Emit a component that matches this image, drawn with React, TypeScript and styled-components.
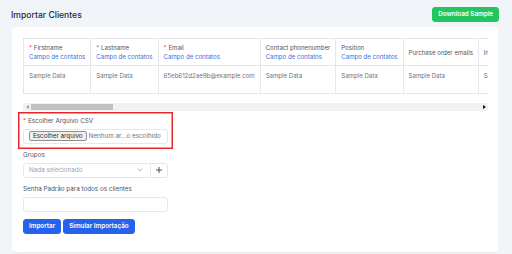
import React from "react";
import styled, { createGlobalStyle } from "styled-components";

const GlobalStyle = createGlobalStyle`
  body {
    margin: 0;
    background: #f1f4f9;
    font-family: "Inter", "Noto Sans", sans-serif;
    color: #374151;
  }
  * {
    box-sizing: border-box;
  }
`;

type Column = {
  name: string;
  required?: boolean;
  contact?: boolean;
  sample?: string;
};

const columns: Column[] = [
  { name: "Firstname", required: true, contact: true },
  { name: "Lastname", required: true, contact: true },
  { name: "Email", required: true, contact: true, sample: "65eb612d2ae9b@example.com" },
  { name: "Contact phonenumber", contact: true },
  { name: "Position", contact: true },
  { name: "Purchase order emails" },
  { name: "Invoice emails" },
  { name: "Estimate emails" },
  { name: "Credit note emails" },
  { name: "Contract emails" },
  { name: "Task emails" },
  { name: "Project emails" },
  { name: "Ticket emails" },
  { name: "Company", required: true },
  { name: "Vat" },
  { name: "Phonenumber" },
  { name: "Country" },
  { name: "City" },
  { name: "Zip" },
  { name: "State" },
  { name: "Address" },
  { name: "Website" },
  { name: "Billing street" },
  { name: "Billing city" },
  { name: "Billing state" },
  { name: "Billing zip" },
  { name: "Billing country" },
  { name: "Shipping street" },
  { name: "Shipping city" },
  { name: "Shipping state" },
  { name: "Shipping zip" },
  { name: "Shipping country" },
];

// visible part of the table / whole table, for the scroll thumb
const scrollRatio = 0.183;

export default function App() {
  return (
    <>
      <GlobalStyle />
      <Page>
        <TopBar>
          <Title>Importar Clientes</Title>
          <Button $variant="green">Download Sample</Button>
        </TopBar>
        <Card>
          <TableWrap>
            <Table>
              <thead>
                <tr>
                  {columns.map((c) => (
                    <Th key={c.name}>
                      <div>
                        {c.required && <Req>* </Req>}
                        {c.name}
                      </div>
                      {c.contact && <Contact>Campo de contatos</Contact>}
                    </Th>
                  ))}
                </tr>
              </thead>
              <tbody>
                <tr>
                  {columns.map((c) => (
                    <Td key={c.name}>{c.sample ?? "Sample Data"}</Td>
                  ))}
                </tr>
              </tbody>
            </Table>
          </TableWrap>
          <ScrollBar>
            <ScrollArrow>
              <svg width="3" height="4" viewBox="0 0 3 4">
                <path d="M3 0 L0 2 L3 4 Z" fill="#a3a3a3" />
              </svg>
            </ScrollArrow>
            <ScrollTrack>
              <ScrollThumb style={{ width: `${scrollRatio * 100}%` }} />
            </ScrollTrack>
            <ScrollArrow>
              <svg width="3" height="4" viewBox="0 0 3 4">
                <path d="M0 0 L3 2 L0 4 Z" fill="#111" />
              </svg>
            </ScrollArrow>
          </ScrollBar>

          <Form>
            <Group $highlight>
              <Label>
                <Req>* </Req>Escolher Arquivo CSV
              </Label>
              <FileBox>
                <FileButton>Escolher arquivo</FileButton>
                <FileName>Nenhum ar...o escolhido</FileName>
              </FileBox>
            </Group>

            <Group>
              <Label>Grupos</Label>
              <SelectGroup>
                <Select>
                  <span>Nada selecionado</span>
                  <svg width="6" height="4" viewBox="0 0 6 4">
                    <path d="M0.7 0.7 L3 3 L5.3 0.7" fill="none" stroke="#9ca3af" strokeWidth="0.8" />
                  </svg>
                </Select>
                <AddButton>
                  <svg width="6" height="6" viewBox="0 0 6 6">
                    <path d="M3 0 V6 M0 3 H6" stroke="#4b5563" strokeWidth="1" />
                  </svg>
                </AddButton>
              </SelectGroup>
            </Group>

            <Group>
              <Label>Senha Padrão para todos os clientes</Label>
              <TextInput />
            </Group>

            <Actions>
              <Button $variant="blue">Importar</Button>
              <Button $variant="blue">Simular Importação</Button>
            </Actions>
          </Form>
        </Card>
      </Page>
    </>
  );
}

const Page = styled.div`
  width: 512px;
  min-height: 254px;
  padding: 7px 13px 3px 12px;
`;

const TopBar = styled.div`
  display: flex;
  align-items: center;
  justify-content: space-between;
  height: 15px;
`;

const Title = styled.h1`
  margin: 0 0 0 -1px;
  font-size: 8.6px;
  font-weight: 500;
  color: #1f2937;
`;

const Button = styled.button<{ $variant: "green" | "blue" }>`
  height: 15px;
  padding: 0 5px;
  border-radius: 3px;
  border: 1px solid ${(p) => (p.$variant === "green" ? "#22c55e" : "#2563eb")};
  background: ${(p) => (p.$variant === "green" ? "#22c55e" : "#2563eb")};
  color: #fff;
  font-family: "Inter", sans-serif;
  font-size: 6.3px;
  font-weight: 600;
  line-height: 13px;
  white-space: nowrap;
`;

const Card = styled.div`
  margin-top: 5px;
  margin-right: 1px;
  background: #fff;
  border-radius: 4px;
  box-shadow: 0 1px 1px rgba(0, 0, 0, 0.04);
  padding: 11px 10px 18px 11px;
`;

const TableWrap = styled.div`
  overflow: hidden;
  padding-bottom: 9px;
`;

const Table = styled.table`
  border-collapse: collapse;
  font-size: 6.1px;
  line-height: 9px;
  white-space: nowrap;
`;

const Th = styled.th`
  border: 1px solid #e5e7eb;
  padding: 4px 5px;
  height: 27px;
  text-align: left;
  font-weight: 400;
  color: #4b5563;
  vertical-align: middle;
`;

const Td = styled.td`
  border: 1px solid #e5e7eb;
  padding: 5px 5px;
  height: 28px;
  color: #6b7280;
  vertical-align: top;
`;

const Req = styled.span`
  color: #ef4444;
`;

const Contact = styled.div`
  color: #3b6fd8;
`;

const ScrollBar = styled.div`
  display: flex;
  height: 8px;
  background: #f1f1f1;
`;

const ScrollArrow = styled.div`
  width: 8px;
  display: flex;
  align-items: center;
  justify-content: center;
`;

const ScrollTrack = styled.div`
  flex: 1;
  display: flex;
  align-items: center;
`;

const ScrollThumb = styled.div`
  height: 6px;
  background: #c1c1c1;
`;

const Form = styled.div`
  width: 145px;
  margin-top: 6px;
  display: flex;
  flex-direction: column;
  gap: 7.5px;
`;

const Group = styled.div<{ $highlight?: boolean }>`
  box-shadow: ${(p) => (p.$highlight ? "0 0 0 3.5px #fff, 0 0 0 5px #e8262a" : "none")};
`;

const Label = styled.div`
  font-size: 6.3px;
  line-height: 9px;
  color: #4b5563;
  margin-bottom: 2.5px;
`;

const FileBox = styled.div`
  height: 15px;
  border: 1px solid #e5e7eb;
  border-radius: 3px;
  display: flex;
  align-items: center;
  gap: 2px;
  padding-left: 5px;
  font-size: 6.3px;
`;

const FileButton = styled.span`
  height: 10px;
  line-height: 8px;
  padding: 0 3px;
  border: 1px solid #8f8f8f;
  border-radius: 2px;
  background: #efefef;
  color: #1f2937;
`;

const FileName = styled.span`
  color: #6b7280;
`;

const SelectGroup = styled.div`
  display: flex;
  height: 15px;
  border: 1px solid #e5e7eb;
  border-radius: 3px;
`;

const Select = styled.div`
  flex: 1;
  display: flex;
  align-items: center;
  justify-content: space-between;
  padding: 0 7px 0 5px;
  font-size: 6.3px;
  color: #9ca3af;
  border-right: 1px solid #e5e7eb;
`;

const AddButton = styled.div`
  width: 16px;
  display: flex;
  align-items: center;
  justify-content: center;
`;

const TextInput = styled.input`
  display: block;
  width: 100%;
  height: 15px;
  border: 1px solid #e5e7eb;
  border-radius: 3px;
  outline: none;
`;

const Actions = styled.div`
  display: flex;
  gap: 2px;
`;
